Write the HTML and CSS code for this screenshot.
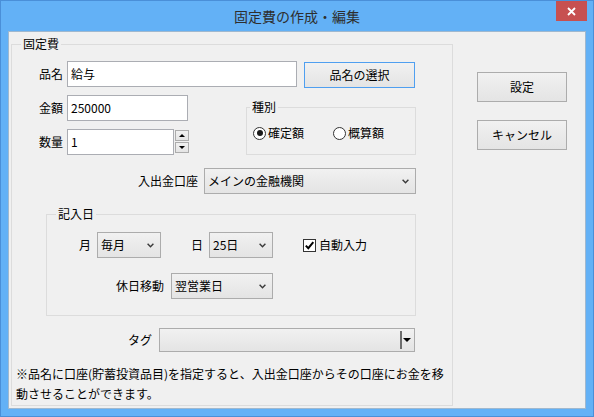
FILE: index.html
```html
<!DOCTYPE html>
<html lang="ja">
<head>
<meta charset="utf-8">
<title>固定費の作成・編集</title>
<link rel="stylesheet" href="styles.css">
</head>
<body>
<div class="window">
  <div class="titlebar">
    <div class="title">固定費の作成・編集</div>
    <div class="close">
      <svg width="9" height="9" viewBox="0 0 9 9"><path d="M1 1 L8 8 M8 1 L1 8" stroke="#fff" stroke-width="1.8" fill="none"/></svg>
    </div>
  </div>
  <div class="client">
    <div class="group main-group">
      <div class="group-title title-main">固定費</div>

      <div class="row row-name">
        <span class="lbl lbl-top">品名</span>
        <div class="textbox tb-name">給与</div>
        <div class="btn btn-pick">品名の選択</div>
      </div>

      <div class="section-amount">
        <div class="amount-col">
          <div class="row">
            <span class="lbl lbl-top">金額</span>
            <div class="textbox tb-amount">250000</div>
          </div>
          <div class="row row-qty">
            <span class="lbl lbl-top">数量</span>
            <div class="textbox tb-qty">1</div>
            <div class="spinner">
              <div class="spin up"></div>
              <div class="spin down"></div>
            </div>
          </div>
        </div>
        <div class="group kind-group">
          <div class="group-title title-kind">種別</div>
          <div class="radio-row">
            <span class="radio on"></span><span class="radio-text">確定額</span>
            <span class="radio second"></span><span class="radio-text">概算額</span>
          </div>
        </div>
      </div>

      <div class="row row-account">
        <span class="lbl lbl-account">入出金口座</span>
        <div class="select sel-account">
          <span>メインの金融機関</span>
          <svg class="chev" width="7" height="5" viewBox="0 0 7 5"><path d="M0.6 0.8 L3.5 3.8 L6.4 0.8" stroke="#3a3a3a" stroke-width="1.4" fill="none"/></svg>
        </div>
      </div>

      <div class="group date-group">
        <div class="group-title title-date">記入日</div>
        <div class="row row-date1">
          <span class="lbl lbl-month">月</span>
          <div class="select sel-small">
            <span>毎月</span>
            <svg class="chev" width="7" height="5" viewBox="0 0 7 5"><path d="M0.6 0.8 L3.5 3.8 L6.4 0.8" stroke="#3a3a3a" stroke-width="1.4" fill="none"/></svg>
          </div>
          <span class="lbl lbl-day">日</span>
          <div class="select sel-small">
            <span>25日</span>
            <svg class="chev" width="7" height="5" viewBox="0 0 7 5"><path d="M0.6 0.8 L3.5 3.8 L6.4 0.8" stroke="#3a3a3a" stroke-width="1.4" fill="none"/></svg>
          </div>
          <span class="checkbox">
            <svg width="11" height="11" viewBox="0 0 11 11"><path d="M1.8 5.6 L4.3 8.2 L9.3 2.2" stroke="#000" stroke-width="2" fill="none"/></svg>
          </span>
          <span class="check-text">自動入力</span>
        </div>
        <div class="row row-date2">
          <span class="lbl lbl-holiday">休日移動</span>
          <div class="select sel-holiday">
            <span>翌営業日</span>
            <svg class="chev" width="7" height="5" viewBox="0 0 7 5"><path d="M0.6 0.8 L3.5 3.8 L6.4 0.8" stroke="#3a3a3a" stroke-width="1.4" fill="none"/></svg>
          </div>
        </div>
      </div>

      <div class="row row-tag">
        <span class="lbl lbl-tag">タグ</span>
        <div class="combo">
          <span class="combo-bar"></span>
          <span class="combo-arrow"></span>
        </div>
      </div>

      <div class="note">
        <span class="note-line">※品名に口座(貯蓄投資品目)を指定すると、入出金口座からその口座にお金を移</span>
        <span class="note-line">動させることができます。</span>
      </div>
    </div>

    <div class="side">
      <div class="btn btn-side">設定</div>
      <div class="btn btn-side">キャンセル</div>
    </div>
  </div>
</div>
</body>
</html>
```

FILE: styles.css
```css
* {
  box-sizing: border-box;
}

html,
body {
  margin: 0;
  padding: 0;
}

body {
  width: 594px;
  height: 417px;
  overflow: hidden;
  font-family: "Noto Sans CJK JP", "Noto Sans", sans-serif;
  font-size: 12px;
  line-height: 14px;
  color: #000;
  background: #ffffff;
}

.window {
  width: 594px;
  height: 417px;
  background: #63b1f6;
  border: 1px solid #4a8fd8;
  display: flex;
  flex-direction: column;
}

/* title bar */
.titlebar {
  height: 30px;
  flex: none;
  display: flex;
  align-items: flex-start;
}

.title {
  flex: 1;
  padding-left: 37px;
  text-align: center;
  line-height: 30px;
  font-size: 14px;
  color: #2e2e2e;
}

.close {
  width: 31px;
  height: 20px;
  margin-right: 6px;
  background: #c75050;
  display: flex;
  align-items: center;
  justify-content: center;
}

/* client area */
.client {
  margin: 0 7px;
  height: 378px;
  flex: none;
  background: #f0f0f0;
  border: 1px solid #9fb8cf;
  display: flex;
  align-items: flex-start;
  padding: 12px 0 0 2px;
}

.group {
  border: 1px solid #dcdcdc;
}

.group-title {
  width: max-content;
  margin-top: -8px;
  padding: 0 2px;
  background: #f0f0f0;
  line-height: 14px;
}

.title-main,
.title-date {
  margin-left: 9px;
}

.title-kind {
  margin-left: 3px;
}

.main-group {
  width: 442px;
  height: 362px;
  flex: none;
}

.row {
  display: flex;
  align-items: flex-start;
}

.lbl {
  flex: none;
  line-height: 26px;
  text-align: right;
  white-space: nowrap;
}

.lbl-top {
  width: 55px;
  padding-right: 4px;
}

.textbox {
  height: 26px;
  border: 1px solid #abadb3;
  background: #ffffff;
  padding-left: 3px;
  line-height: 24px;
  flex: none;
}

.btn {
  display: flex;
  align-items: center;
  justify-content: center;
  border: 1px solid #acacac;
  background: linear-gradient(#f1f1f1, #e4e4e4);
  flex: none;
}

/* row: 品名 */
.row-name {
  margin-top: 10px;
}

.tb-name {
  width: 230px;
}

.btn-pick {
  width: 111px;
  height: 26px;
  margin: 1px 0 0 7px;
  border-color: #4f9ff0;
}

/* 金額 / 数量 / 種別 */
.section-amount {
  display: flex;
  align-items: flex-start;
  margin-top: 7px;
}

.amount-col {
  width: 234px;
  flex: none;
}

.tb-amount {
  width: 121px;
}

.row-qty {
  margin-top: 8px;
}

.tb-qty {
  width: 107px;
}

.spinner {
  display: flex;
  flex-direction: column;
  gap: 1px;
  margin: 1px 0 0 1px;
}

.spin {
  width: 14px;
  height: 11px;
  border: 1px solid #acacac;
  background: linear-gradient(#f1f1f1, #e4e4e4);
  display: flex;
  align-items: center;
  justify-content: center;
}

.spin.up::after {
  content: "";
  border-left: 3px solid transparent;
  border-right: 3px solid transparent;
  border-bottom: 3px solid #000;
}

.spin.down::after {
  content: "";
  border-left: 3px solid transparent;
  border-right: 3px solid transparent;
  border-top: 3px solid #000;
}

.kind-group {
  width: 170px;
  height: 48px;
  margin-top: 12px;
  flex: none;
}

.radio-row {
  display: flex;
  align-items: center;
  margin-top: 12px;
  padding-left: 6px;
  height: 14px;
}

.radio {
  width: 13px;
  height: 13px;
  border: 1px solid #333;
  border-radius: 50%;
  background: #fff;
  display: flex;
  align-items: center;
  justify-content: center;
  flex: none;
}

.radio.on::after {
  content: "";
  width: 6px;
  height: 6px;
  border-radius: 50%;
  background: #1a1a1a;
}

.radio.second {
  margin-left: 29px;
}

.radio-text {
  margin-left: 2px;
  white-space: nowrap;
}

/* 入出金口座 */
.row-account {
  margin-top: 13px;
}

.lbl-account {
  width: 192px;
  padding-right: 6px;
}

.select {
  height: 26px;
  border: 1px solid #acacac;
  background: linear-gradient(#f1f1f1, #e4e4e4);
  display: flex;
  align-items: center;
  padding: 0 6px 0 3px;
  white-space: nowrap;
  flex: none;
}

.select .chev {
  margin-left: auto;
  flex: none;
}

.sel-account {
  width: 212px;
}

/* 記入日 */
.date-group {
  width: 370px;
  height: 102px;
  margin: 20px 0 0 34px;
}

.row-date1 {
  margin-top: 11px;
}

.lbl-month {
  width: 50px;
  padding-right: 6px;
}

.lbl-day {
  width: 48px;
  padding-right: 6px;
}

.sel-small {
  width: 64px;
}

.checkbox {
  width: 13px;
  height: 13px;
  margin: 7px 0 0 30px;
  border: 1px solid #333;
  background: #fff;
  display: flex;
  align-items: center;
  justify-content: center;
  flex: none;
}

.check-text {
  margin-left: 3px;
  line-height: 26px;
  white-space: nowrap;
}

.row-date2 {
  margin-top: 15px;
}

.lbl-holiday {
  width: 124px;
  padding-right: 7px;
}

.sel-holiday {
  width: 102px;
}

/* タグ */
.row-tag {
  margin-top: 12px;
}

.lbl-tag {
  width: 147px;
  padding-right: 7px;
  line-height: 24px;
}

.combo {
  width: 256px;
  height: 24px;
  border: 1px solid #acacac;
  background: linear-gradient(#f1f1f1, #e4e4e4);
  display: flex;
  align-items: center;
  justify-content: flex-end;
  padding-right: 3px;
  flex: none;
}

.combo-bar {
  width: 2px;
  height: 18px;
  background: #6d6d6d;
}

.combo-arrow {
  margin-left: 1px;
  border-left: 4px solid transparent;
  border-right: 4px solid transparent;
  border-top: 4px solid #000;
}

/* note */
.note {
  margin-top: 12px;
  padding-left: 4px;
  line-height: 20px;
}

.note-line {
  display: block;
  white-space: nowrap;
}

/* right column */
.side {
  display: flex;
  flex-direction: column;
  gap: 18px;
  margin: 28px 0 0 24px;
}

.btn-side {
  width: 90px;
  height: 30px;
}
```
